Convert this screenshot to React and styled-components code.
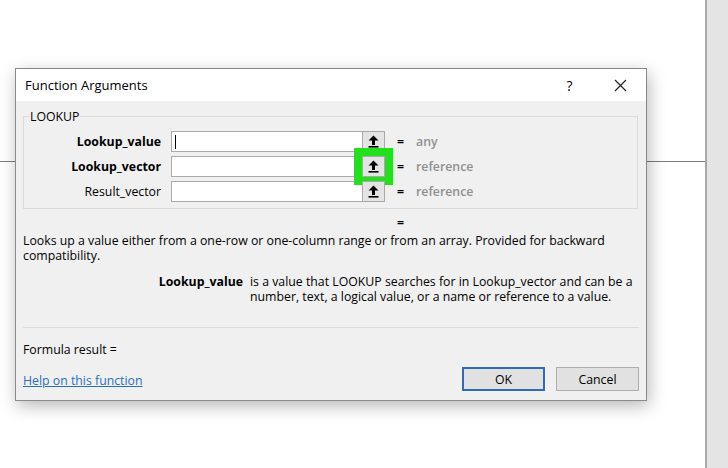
import React from 'react'
import styled, { createGlobalStyle } from 'styled-components'

const Global = createGlobalStyle`
html, body {
  margin: 0;
  padding: 0;
  background: #ffffff;
}
body {
  font-family: "Open Sans", "Noto Sans", "Liberation Sans", sans-serif;
  font-size: 12.3px;
  color: #000;
}
`

const Page = styled.div`
display: flex;
width: 728px;
height: 468px;
overflow: hidden;
`
const Sheet = styled.div`
position: relative;
flex: 1;
padding-top: 161px;
background: #fff;
`
const SheetRule = styled.div`
height: 1px;
background: #7d7d7d;
`
const ScrollStrip = styled.div`
width: 21px;
border-left: 2px solid #a8a8a8;
background: #e4e4e4;
`
const Dialog = styled.div`
position: absolute;
left: 15px;
top: 68px;
width: 630px;
border: 1px solid #8a8a8a;
background: #f0f0f0;
box-shadow: 2px 5px 16px rgba(0, 0, 0, 0.28);
`
const TitleBar = styled.div`
display: flex;
align-items: center;
height: 32px;
padding-left: 9px;
background: #fff;
`
const Title = styled.div`
flex: 1;
font-size: 13px;
`
const TitleButton = styled.div`
width: 51px;
display: flex;
justify-content: center;
align-items: center;
font-size: 14px;
`
const Body = styled.div`
padding: 8px 7px 9px 7px;
`
const Group = styled.fieldset`
margin: 0 1px 0 0;
padding: 7px 0 6px 0;
border: 1px solid #dadada;
`
const Legend = styled.legend`
margin-left: 5px;
padding: 0 1px;
line-height: 15px;
`
const Row = styled.div`
display: grid;
grid-template-columns: 147px 191px 23px 1fr;
align-items: center;
height: 21px;
& + & {
  margin-top: 4px;
}
`
const Label = styled.div`
text-align: right;
padding-right: 10px;
font-weight: ${p => (p.$bold ? 700 : 400)};
`
const Field = styled.div`
height: 19px;
border: 1px solid #a9a9a9;
border-right: none;
background: #fff;
display: flex;
align-items: center;
padding-left: 3px;
`
const Caret = styled.span`
width: 1px;
height: 14px;
background: #000;
`
const PickCell = styled.div`
position: relative;
height: 21px;
`
const PickButton = styled.div`
box-sizing: border-box;
height: 21px;
border: 1px solid #a9a9a9;
background: #e4e4e4;
display: flex;
align-items: center;
justify-content: center;
`
const Highlight = styled.div`
position: absolute;
inset: -8px;
border: 8px solid #22e01c;
pointer-events: none;
`
const Result = styled.div`
display: flex;
gap: 12px;
padding-left: 12px;
`
const Equals = styled.span`
font-weight: 700;
`
const ResultValue = styled.span`
color: #8f8f8f;
font-weight: 600;
`
const EqualsLine = styled.div`
margin-top: 6px;
padding-left: 374px;
line-height: 15px;
font-weight: 700;
`
const Description = styled.div`
margin-top: 3px;
line-height: 15px;
padding-right: 20px;
`
const ArgHelp = styled.div`
display: grid;
grid-template-columns: 220px 390px;
column-gap: 7px;
margin-top: 11px;
line-height: 15px;
`
const ArgName = styled.div`
text-align: right;
font-weight: 700;
`
const Divider = styled.div`
margin-top: 23px;
height: 1px;
background: #dcdcdc;
`
const FormulaLine = styled.div`
margin-top: 14px;
line-height: 15px;
`
const Footer = styled.div`
display: flex;
align-items: center;
margin-top: 10px;
`
const HelpLink = styled.a`
flex: 1;
color: #2a6fbe;
text-decoration: underline;
cursor: pointer;
margin-top: 2px;
`
const DialogButton = styled.button`
box-sizing: border-box;
width: 83px;
height: 24px;
margin-left: 11px;
font: inherit;
background: #e1e1e1;
border: ${p => (p.$primary ? '2px solid #2f6cb5' : '1px solid #adadad')};
color: #000;
`

const PickIcon = () => (
  <svg width="11" height="13" viewBox="0 0 11 13">
    <path d="M5.5 0.5 L10.5 5.5 H7 V10 H4 V5.5 H0.5 Z" fill="#000" />
    <rect x="0.5" y="11" width="10" height="1.6" fill="#000" />
  </svg>
)

const CloseIcon = () => (
  <svg width="13" height="13" viewBox="0 0 13 13">
    <path d="M1 1 L12 12 M12 1 L1 12" stroke="#222" strokeWidth="1.2" fill="none" />
  </svg>
)

const args = [
  { name: 'Lookup_value', bold: true, value: 'any', caret: true },
  { name: 'Lookup_vector', bold: true, value: 'reference', highlight: true },
  { name: 'Result_vector', bold: false, value: 'reference' },
]

export default function App() {
  return (
    <>
      <Global />
      <Page>
        <Sheet>
          <SheetRule />
          <Dialog>
            <TitleBar>
              <Title>Function Arguments</Title>
              <TitleButton>?</TitleButton>
              <TitleButton>
                <CloseIcon />
              </TitleButton>
            </TitleBar>
            <Body>
              <Group>
                <Legend>LOOKUP</Legend>
                {args.map(a => (
                  <Row key={a.name}>
                    <Label $bold={a.bold}>{a.name}</Label>
                    <Field>{a.caret && <Caret />}</Field>
                    <PickCell>
                      <PickButton>
                        <PickIcon />
                      </PickButton>
                      {a.highlight && <Highlight />}
                    </PickCell>
                    <Result>
                      <Equals>=</Equals>
                      <ResultValue>{a.value}</ResultValue>
                    </Result>
                  </Row>
                ))}
              </Group>
              <EqualsLine>=</EqualsLine>
              <Description>
                Looks up a value either from a one-row or one-column range or from an array. Provided for backward compatibility.
              </Description>
              <ArgHelp>
                <ArgName>Lookup_value</ArgName>
                <div>
                  is a value that LOOKUP searches for in Lookup_vector and can be a number, text, a logical value, or a name or reference to a value.
                </div>
              </ArgHelp>
              <Divider />
              <FormulaLine>Formula result =</FormulaLine>
              <Footer>
                <HelpLink>Help on this function</HelpLink>
                <DialogButton $primary>OK</DialogButton>
                <DialogButton>Cancel</DialogButton>
              </Footer>
            </Body>
          </Dialog>
        </Sheet>
        <ScrollStrip />
      </Page>
    </>
  )
}
